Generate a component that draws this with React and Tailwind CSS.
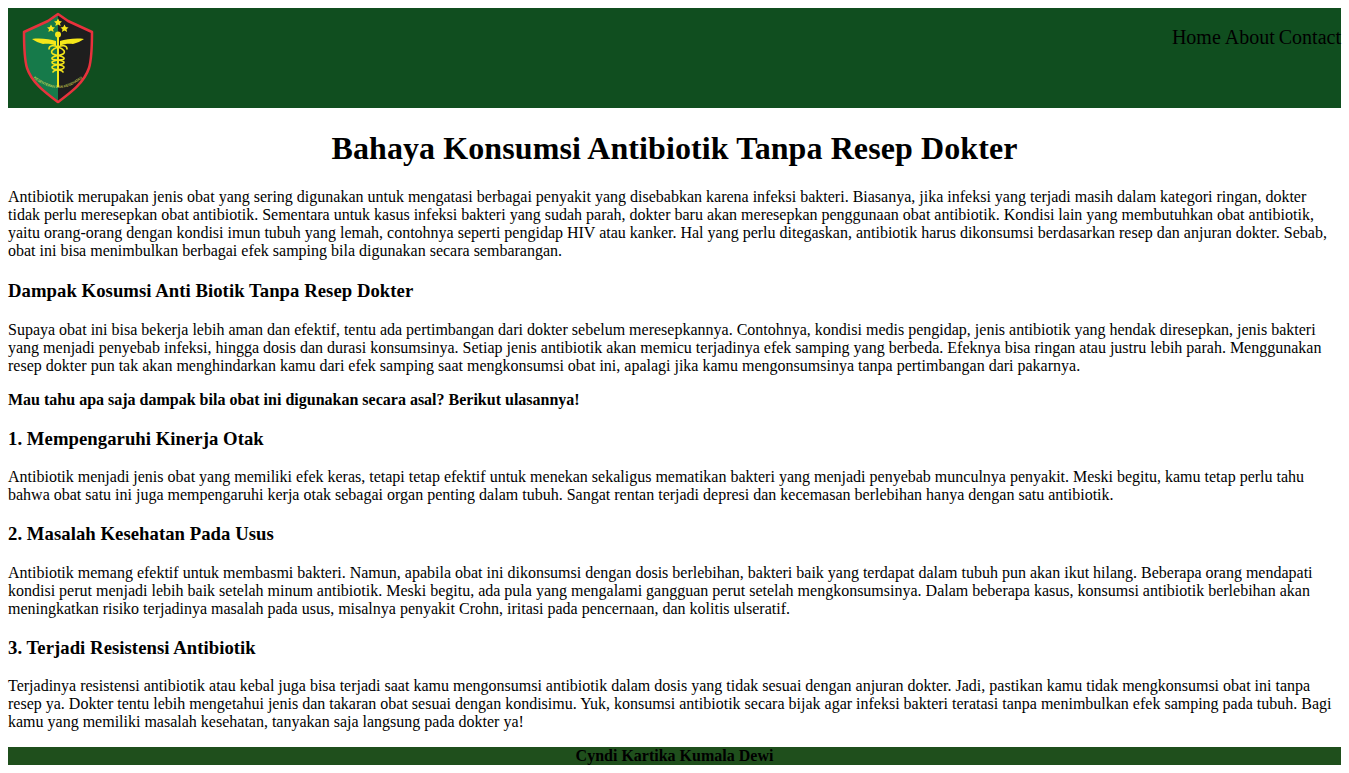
import React from "react";

const Logo = () => (
  <svg viewBox="0 0 100 100" className="w-[100px] h-[100px] block" aria-label="Logo">
    <defs>
      <path id="logoArc" d="M22 67 Q 50 93 78 67" fill="none" />
    </defs>
    <path d="M50 6 L60 13 L84 24 C84 38 84 50 81 60 C76 75 62 85 50 94 Z" fill="#1e1e1e" />
    <path d="M50 6 L40 13 L16 24 C16 38 16 50 19 60 C24 75 38 85 50 94 Z" fill="#167a4a" />
    <path
      d="M50 6 L60 13 L84 24 C84 38 84 50 81 60 C76 75 62 85 50 94 C38 85 24 75 19 60 C16 50 16 38 16 24 L40 13 Z"
      fill="none"
      stroke="#e8323c"
      strokeWidth="2.5"
      strokeLinejoin="round"
    />
    <g fill="#f6e71a">
      <path d="M50 10.5 L51.3 13 L54 13.4 L52 15.2 L52.6 18 L50 16.6 L47.4 18 L48 15.2 L46 13.4 L48.7 13 Z" />
      <path d="M43 16.5 L44.3 19 L47 19.4 L45 21.2 L45.6 24 L43 22.6 L40.4 24 L41 21.2 L39 19.4 L41.7 19 Z" />
      <path d="M56.5 16.5 L57.8 19 L60.5 19.4 L58.5 21.2 L59.1 24 L56.5 22.6 L53.9 24 L54.5 21.2 L52.5 19.4 L55.2 19 Z" />
      <circle cx="50" cy="26.5" r="3" />
      <path d="M24 31 C32 30 42 31 48 33 L48 38 C42 35 38 36 35 36 C31 35 27 33 24 31 Z" />
      <path d="M76 31 C68 30 58 31 52 33 L52 38 C58 35 62 36 65 36 C69 35 73 33 76 31 Z" />
      <rect x="49" y="29" width="2" height="50" />
    </g>
    <g fill="none" stroke="#f6e71a" strokeWidth="1.6" strokeLinecap="round">
      <path d="M41 41 C41 37 46 37 50 39 C56 41 58 44 55 46 C52 48 46 47 44 50 C43 53 53 51 56 54 C57 57 46 56 44 59 C43 62 54 61 55 64" />
      <path d="M59 41 C59 37 54 37 50 39 C44 41 42 44 45 46 C48 48 54 47 56 50 C57 53 47 51 44 54 C43 57 54 56 56 59 C57 62 46 61 45 64" />
    </g>
    <text fontSize="3.5" fill="#e7e85a" fontFamily="'Liberation Sans', sans-serif">
      <textPath href="#logoArc" startOffset="50%" textAnchor="middle">
        KESENTERAN DAN KESEHATAN
      </textPath>
    </text>
  </svg>
);

const App = () => {
  return (
    <div className="m-2 font-['Liberation_Serif',serif] text-[16px] leading-[normal] text-black bg-white">
      <header className="flex justify-between h-[100px] bg-[#104e1f]">
        <Logo />
        <nav className="flex gap-1 pt-[18px] text-[20px] h-fit">
          <a href="#home">Home</a>
          <a href="#about">About</a>
          <a href="#contact">Contact</a>
        </nav>
      </header>

      <h1 className="mt-[22.44px] mb-[20.44px] text-center text-[32px] font-bold tracking-[0.09px]">
        Bahaya Konsumsi Antibiotik Tanpa Resep Dokter
      </h1>
      <p className="my-4">
        Antibiotik merupakan jenis obat yang sering digunakan untuk mengatasi berbagai penyakit yang disebabkan karena infeksi bakteri. Biasanya, jika infeksi yang terjadi masih dalam kategori ringan, dokter tidak perlu meresepkan obat antibiotik. Sementara untuk kasus infeksi bakteri yang sudah parah, dokter baru akan meresepkan penggunaan obat antibiotik. Kondisi lain yang membutuhkan obat antibiotik, yaitu orang-orang dengan kondisi imun tubuh yang lemah, contohnya seperti pengidap HIV atau kanker. Hal yang perlu ditegaskan, antibiotik harus dikonsumsi berdasarkan resep dan anjuran dokter. Sebab, obat ini bisa menimbulkan berbagai efek samping bila digunakan secara sembarangan.
      </p>

      <h3 className="mt-[20.42px] mb-[18.72px] text-[18.72px] font-bold tracking-[0.045px]">Dampak Kosumsi Anti Biotik Tanpa Resep Dokter</h3>
      <p className="my-4">
        Supaya obat ini bisa bekerja lebih aman dan efektif, tentu ada pertimbangan dari dokter sebelum meresepkannya. Contohnya, kondisi medis pengidap, jenis antibiotik yang hendak diresepkan, jenis bakteri yang menjadi penyebab infeksi, hingga dosis dan durasi konsumsinya. Setiap jenis antibiotik akan memicu terjadinya efek samping yang berbeda. Efeknya bisa ringan atau justru lebih parah. Menggunakan resep dokter pun tak akan menghindarkan kamu dari efek samping saat mengkonsumsi obat ini, apalagi jika kamu mengonsumsinya tanpa pertimbangan dari pakarnya.
      </p>
      <p className="my-4 font-bold">Mau tahu apa saja dampak bila obat ini digunakan secara asal? Berikut ulasannya!</p>

      <h3 className="my-[18.72px] text-[18.72px] font-bold tracking-[0.045px]">1. Mempengaruhi Kinerja Otak</h3>
      <p className="my-4">
        Antibiotik menjadi jenis obat yang memiliki efek keras, tetapi tetap efektif untuk menekan sekaligus mematikan bakteri yang menjadi penyebab munculnya penyakit. Meski begitu, kamu tetap perlu tahu bahwa obat satu ini juga mempengaruhi kerja otak sebagai organ penting dalam tubuh. Sangat rentan terjadi depresi dan kecemasan berlebihan hanya dengan satu antibiotik.
      </p>

      <h3 className="my-[18.72px] text-[18.72px] font-bold tracking-[0.045px]">2. Masalah Kesehatan Pada Usus</h3>
      <p className="my-4">
        Antibiotik memang efektif untuk membasmi bakteri. Namun, apabila obat ini dikonsumsi dengan dosis berlebihan, bakteri baik yang terdapat dalam tubuh pun akan ikut hilang. Beberapa orang mendapati kondisi perut menjadi lebih baik setelah minum antibiotik. Meski begitu, ada pula yang mengalami gangguan perut setelah mengkonsumsinya. Dalam beberapa kasus, konsumsi antibiotik berlebihan akan meningkatkan risiko terjadinya masalah pada usus, misalnya penyakit Crohn, iritasi pada pencernaan, dan kolitis ulseratif.
      </p>

      <h3 className="my-[18.72px] text-[18.72px] font-bold tracking-[0.045px]">3. Terjadi Resistensi Antibiotik</h3>
      <p className="my-4">
        Terjadinya resistensi antibiotik atau kebal juga bisa terjadi saat kamu mengonsumsi antibiotik dalam dosis yang tidak sesuai dengan anjuran dokter. Jadi, pastikan kamu tidak mengkonsumsi obat ini tanpa resep ya. Dokter tentu lebih mengetahui jenis dan takaran obat sesuai dengan kondisimu. Yuk, konsumsi antibiotik secara bijak agar infeksi bakteri teratasi tanpa menimbulkan efek samping pada tubuh. Bagi kamu yang memiliki masalah kesehatan, tanyakan saja langsung pada dokter ya!
      </p>

      <footer className="bg-[#1f4f1c] text-center font-bold">Cyndi Kartika Kumala Dewi</footer>
    </div>
  );
};

export default App;
